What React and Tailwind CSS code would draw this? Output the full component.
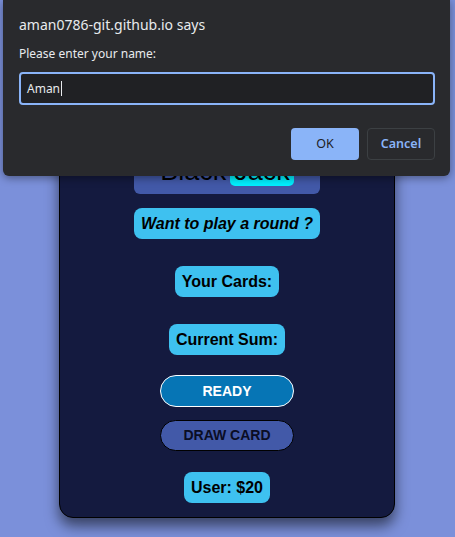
export default function App() {
  return (
    <div className="relative h-[537px] w-[455px] overflow-hidden bg-[#7b90da] font-['Liberation_Sans',Arial,sans-serif]">
      <div className="ml-[59px] mt-[108px] flex w-[336px] flex-col items-center rounded-[14px] border border-black bg-[#141a3f] pt-[40px] pb-[14px] shadow-[0_8px_14px_rgba(0,0,0,0.55)]">
        <div className="flex h-[45px] w-[186px] items-end justify-center gap-1 rounded-[6px] bg-[#4259a8] pb-[8px] text-[27px] leading-[30px] text-black">
          <span>Black</span>
          <span className="rounded-[5px] bg-[#00f0ff] px-1">Jack</span>
        </div>
        <div className="mt-[14px] flex h-[31px] w-[186px] items-center justify-center rounded-[8px] bg-[#3ec1f0] text-[16px] font-bold italic text-black">
          Want to play a round ?
        </div>
        <div className="mt-[27px] flex h-[31px] w-[104px] items-center justify-center rounded-[8px] bg-[#3ec1f0] text-[16px] font-bold text-black">
          Your Cards:
        </div>
        <div className="mt-[27px] flex h-[31px] w-[116px] items-center justify-center rounded-[8px] bg-[#3ec1f0] text-[16px] font-bold text-black">
          Current Sum:
        </div>
        <button className="mt-[20px] flex h-[32px] w-[134px] items-center justify-center rounded-full border border-white bg-[#0675b5] text-[14px] font-bold text-white">
          READY
        </button>
        <button className="mt-[13px] flex h-[31px] w-[134px] items-center justify-center rounded-full border border-black bg-[#4259a8] text-[14px] font-bold text-[#0a0d24]">
          DRAW CARD
        </button>
        <div className="mt-[21px] flex h-[31px] w-[86px] items-center justify-center rounded-[8px] bg-[#3ec1f0] text-[16px] font-bold text-black">
          User: $20
        </div>
      </div>

      <div className="absolute left-[3px] top-0 h-[176px] w-[447px] rounded-b-[6px] bg-[#292a2d] pl-[16px] pr-[15px] font-['Noto_Sans','Open_Sans',sans-serif] shadow-[0_2px_8px_rgba(0,0,0,0.4)]">
        <div className="pt-[14px] text-[14px] leading-[22px] text-[#e8eaed]">aman0786-git.github.io says</div>
        <div className="mt-[9px] text-[12px] leading-[18px] text-[#e8eaed]">Please enter your name:</div>
        <div className="mt-[9px] flex h-[33px] w-[416px] items-center rounded-[4px] border-2 border-[#8ab4f8] bg-[#202124] px-[6px] text-[12px] text-[#e8eaed]">
          <span>Aman</span>
          <span className="ml-px h-[15px] w-px bg-[#e8eaed]" />
        </div>
        <div className="mt-[23px] flex justify-end gap-[8px]">
          <button className="h-[32px] w-[68px] rounded-[4px] bg-[#8ab4f8] text-[12.5px] text-[#202124]">OK</button>
          <button className="h-[32px] w-[68px] rounded-[4px] border border-[#3c4043] text-[12.5px] font-semibold text-[#8ab4f8]">Cancel</button>
        </div>
      </div>
    </div>
  );
}
